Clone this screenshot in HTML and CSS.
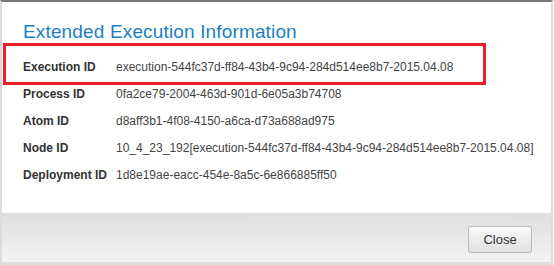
FILE: index.html
```html
<!DOCTYPE html>
<html lang="en">

<head>
    <meta charset="UTF-8">
    <title>Extended Execution Information</title>
    <link rel="stylesheet" href="styles.css">
</head>

<body>
    <div class="dialog">
        <div class="content">
            <h1>Extended Execution Information</h1>
            <table class="info">
                <tr>
                    <th>Execution ID</th>
                    <td>execution-544fc37d-ff84-43b4-9c94-284d514ee8b7-2015.04.08</td>
                </tr>
                <tr>
                    <th>Process ID</th>
                    <td>0fa2ce79-2004-463d-901d-6e05a3b74708</td>
                </tr>
                <tr>
                    <th>Atom ID</th>
                    <td>d8aff3b1-4f08-4150-a6ca-d73a688ad975</td>
                </tr>
                <tr>
                    <th>Node ID</th>
                    <td>10_4_23_192[execution-544fc37d-ff84-43b4-9c94-284d514ee8b7-2015.04.08]</td>
                </tr>
                <tr>
                    <th>Deployment ID</th>
                    <td>1d8e19ae-eacc-454e-8a5c-6e866885ff50</td>
                </tr>
            </table>
            <div class="highlight"></div>
        </div>
        <div class="footer">
            <button class="btn">Close</button>
        </div>
    </div>
</body>

</html>
```

FILE: styles.css
```css
body {
    margin: 0;
    font-family: "Liberation Sans", Arial, sans-serif;
    background: #fff;
}

.dialog {
    width: 549px;
    height: 260px;
    border-top: 2px solid #777;
    border-left: 2px solid #dcdcdc;
    border-right: 2px solid #dcdcdc;
    border-bottom: 3px solid #dcdcdc;
    display: flex;
    flex-direction: column;
}

.content {
    position: relative;
    flex: 1;
    padding: 19px 0 0 21px;
}

h1 {
    margin: 0 0 11px;
    font-size: 19px;
    line-height: 22px;
    font-weight: normal;
    letter-spacing: 0.15px;
    color: #1a80c4;
}

.info {
    border-collapse: collapse;
    font-size: 12px;
}

.info th,
.info td {
    padding: 0;
    height: 27px;
    line-height: 27px;
    white-space: nowrap;
}

.info th {
    width: 93px;
    text-align: left;
    font-weight: bold;
    color: #333;
}

.info td {
    color: #444;
}

.highlight {
    position: absolute;
    left: 1px;
    top: 41px;
    width: 477px;
    height: 36px;
    border: 3px solid #e8202a;
}

.footer {
    height: 49px;
    display: flex;
    justify-content: flex-end;
    align-items: flex-start;
    padding: 13px 19px 0 0;
    box-sizing: border-box;
    background: linear-gradient(#e0dede, #f3f3f3);
}

.btn {
    width: 64px;
    height: 27px;
    padding: 0;
    font-family: inherit;
    font-size: 13px;
    color: #333;
    border: 1px solid #b9b9b9;
    border-radius: 3px;
    background: linear-gradient(#f9f9f9, #e1e1e1);
}
```
